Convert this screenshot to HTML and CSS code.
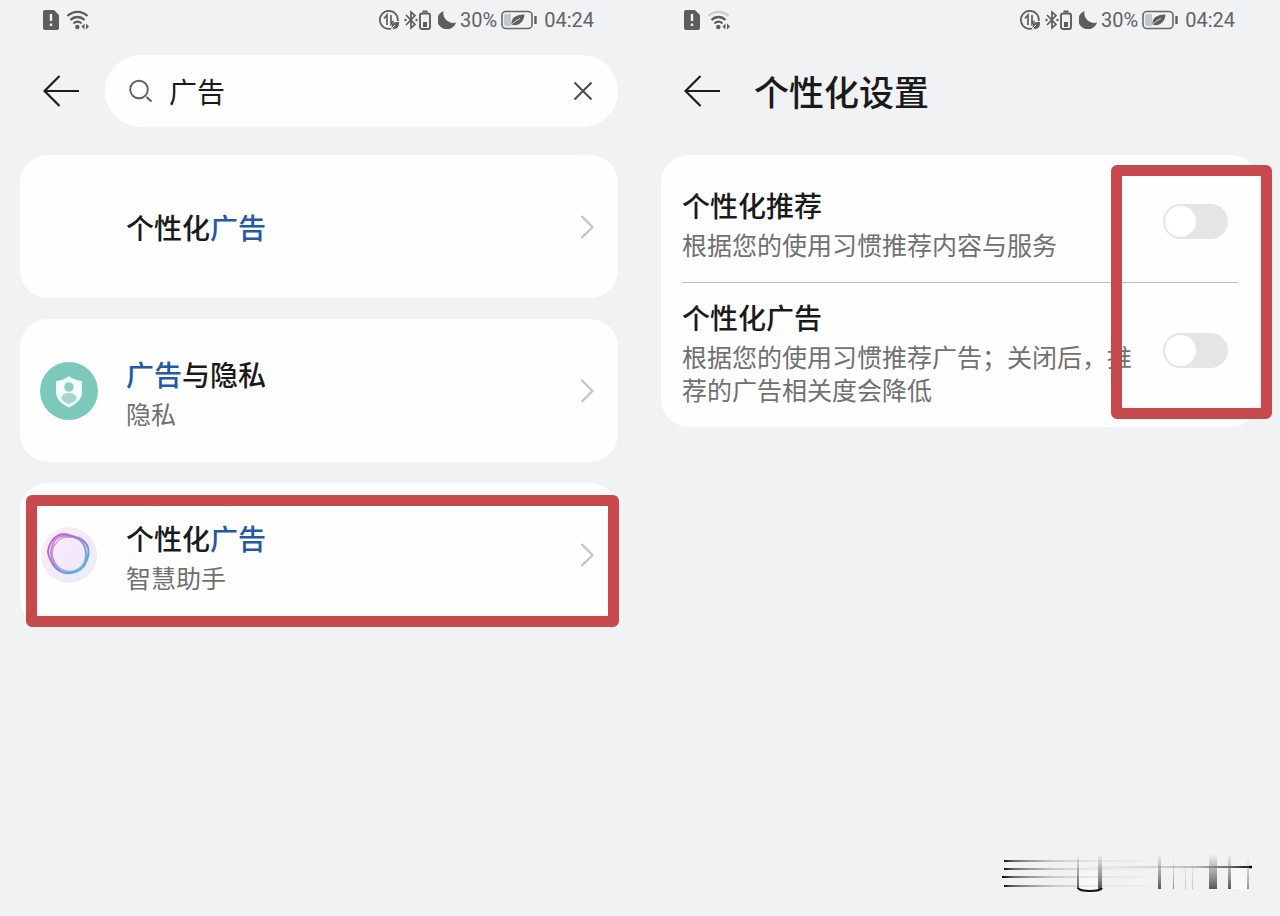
FILE: index.html
```html
<!DOCTYPE html>
<html lang="zh-CN">

<head>
  <meta charset="UTF-8">
  <meta name="viewport" content="width=device-width, initial-scale=1.0">
  <title>个性化广告</title>
  <link rel="stylesheet" href="styles.css">
</head>

<body>
  <!-- shared icons -->
  <svg class="sprite" aria-hidden="true">
    <symbol id="i-sim" viewBox="0 0 16 20">
      <path d="M2 0h9l5 5v13a2 2 0 0 1-2 2H2a2 2 0 0 1-2-2V2a2 2 0 0 1 2-2z" fill="#5c5d5f"/>
      <path d="M8 4v7M8 13.500v2.500" stroke="#f1f2f4" stroke-width="2.400"/>
    </symbol>
    <symbol id="i-wifi" viewBox="0 0 24 20">
      <path d="M1.500 6C7 .4 16 .4 21.500 6" fill="none" stroke="currentColor" stroke-width="2.300"/>
      <path d="M4.500 10c4-4 10-4 14 0M7.500 13.500c2.500-2.300 5.500-2.300 8 0" fill="none" stroke="#5c5d5f" stroke-width="2.300"/>
      <circle cx="11.300" cy="17" r="2.200" fill="#5c5d5f"/>
      <path d="M18.500 13.500v6l-3-3zM20 13.500v6l3-3z" fill="#5c5d5f"/>
    </symbol>
    <symbol id="i-data" viewBox="0 0 22 22">
      <path d="M14 19.300A9 9 0 1 1 19.800 12" fill="none" stroke="#5c5d5f" stroke-width="1.700"/>
      <path d="M9 16V6L6 9.500M13 6v9l2.500-3" fill="none" stroke="#5c5d5f" stroke-width="1.700"/>
      <path d="M14 15c2-2 4-2 7-2 0 4-1 7-5 7-2 0-3-3-2-5z" fill="#5c5d5f"/>
      <path d="M13 20l4-4" stroke="#f1f2f4"/>
    </symbol>
    <symbol id="i-bt" viewBox="0 0 14 20">
      <path d="M2 5l9 9.500L7 18V2l4 3.500L2 15" fill="none" stroke="#5c5d5f" stroke-width="1.700"/>
      <circle cx="1.500" cy="10" r="1.200" fill="#5c5d5f"/>
      <circle cx="12.500" cy="10" r="1.200" fill="#5c5d5f"/>
    </symbol>
    <symbol id="i-btbat" viewBox="0 0 12 20">
      <rect x="1" y="3.500" width="10" height="15.500" rx="2" fill="none" stroke="#5c5d5f" stroke-width="1.900"/>
      <path d="M3.500 1.500h5" stroke="#5c5d5f" stroke-width="2"/>
      <path d="M4 12h4v5H4z" fill="#5c5d5f"/>
    </symbol>
    <symbol id="i-moon" viewBox="0 0 18 18">
      <path d="M5.500 0A9.500 9.500 0 1 0 18 11.500C11 13.500 4 7.500 5.500 0z" fill="#5c5d5f"/>
    </symbol>
    <symbol id="i-battery" viewBox="0 0 36 20">
      <rect x="1" y="1.500" width="30" height="17" rx="4" fill="#f1f2f4" stroke="#66676a" stroke-width="1.600"/>
      <path d="M3 6a2 2 0 0 1 2-2h5v12H5a2 2 0 0 1-2-2z" fill="#c6c7c9"/>
      <path d="M10.500 15C10 8 14 5 23.500 4.500 23 12 18 16 11.500 15z" fill="#5c5d5f"/>
      <path d="M9 16.500c3-4 6-6 10-8" fill="none" stroke="#d8d9db"/>
      <path d="M34.500 6v8" stroke="#5c5d5f" stroke-width="2.400"/>
    </symbol>
    <symbol id="i-back" viewBox="0 0 36 32">
      <path d="M36 16H1.500M16.500 1L1.500 16l15 15" fill="none" stroke="#1c1d1f" stroke-width="2.200"/>
    </symbol>
    <symbol id="i-search" viewBox="0 0 24 24">
      <circle cx="10" cy="10.500" r="8.800" fill="none" stroke="#5f6062" stroke-width="1.900"/>
      <path d="M17.500 18l5 4.500" stroke="#5f6062" stroke-width="2.200"/>
    </symbol>
    <symbol id="i-close" viewBox="0 0 20 20">
      <path d="M1.500 1.500l17 17M18.500 1.500l-17 17" stroke="#4c4d4f" stroke-width="2.100"/>
    </symbol>
    <symbol id="i-chevron" viewBox="0 0 14 24">
      <path d="M1.500 1l11 11-11 11" fill="none" stroke="#c4c4c5" stroke-width="2.200"/>
    </symbol>
  </svg>

  <div class="screens">
    <section class="screen">
      <div class="status-bar">
        <svg class="sim"><use href="#i-sim"/></svg>
        <svg class="wifi"><use href="#i-wifi"/></svg>
        <div class="status-right">
          <svg class="data"><use href="#i-data"/></svg>
          <svg class="bt"><use href="#i-bt"/></svg>
          <svg class="bt-battery"><use href="#i-btbat"/></svg>
          <svg class="moon"><use href="#i-moon"/></svg>
          <span>30%</span>
          <svg class="battery"><use href="#i-battery"/></svg>
          <span class="time">04:24</span>
        </div>
      </div>

      <header class="header">
        <button class="back" type="button" aria-label="返回"><svg><use href="#i-back"/></svg></button>
        <form class="search" role="search">
          <svg class="search-icon"><use href="#i-search"/></svg>
          <input class="search-input" type="text" value="广告" aria-label="搜索">
          <button class="clear" type="button" aria-label="清除"><svg><use href="#i-close"/></svg></button>
        </form>
      </header>

      <div class="results">
        <a class="card result" href="#">
          <span class="result-icon"></span>
          <span class="result-text">
            <span class="title">个性化<mark>广告</mark></span>
          </span>
          <svg class="chevron"><use href="#i-chevron"/></svg>
        </a>

        <a class="card result" href="#">
          <svg class="result-icon" viewBox="0 0 58 58">
            <circle cx="29" cy="29" r="29" fill="#7cc8bb"/>
            <path d="M29 14c4 3 8 4.500 13 5v11c0 7-5 11.500-13 15.500C21 41.500 16 37 16 30V19c5-.5 9-2 13-5z" fill="#f2fffd"/>
            <circle cx="29" cy="25" r="4.800" fill="#93cfc5"/>
            <path d="M21.500 37c0-4 3-6 7.500-6s7.500 2 7.500 6c-2 2.500-4.500 4-7.500 5-3-1-5.500-2.500-7.500-5z" fill="#a5d5cd"/>
          </svg>
          <span class="result-text">
            <span class="title"><mark>广告</mark>与隐私</span>
            <span class="desc">隐私</span>
          </span>
          <svg class="chevron"><use href="#i-chevron"/></svg>
        </a>

        <a class="card result" href="#">
          <svg class="result-icon" viewBox="0 0 58 58">
            <defs>
              <linearGradient id="ring" x1="0" y1="0" x2="1" y2="1">
                <stop offset="0" stop-color="#c660c8"/>
                <stop offset=".45" stop-color="#9a80d4"/>
                <stop offset=".75" stop-color="#649fda"/>
                <stop offset="1" stop-color="#6cb5e0"/>
              </linearGradient>
              <linearGradient id="halo" x1="0" y1="0" x2="1" y2="1">
                <stop offset="0" stop-color="#faf0ec"/>
                <stop offset=".5" stop-color="#f5e8fb"/>
                <stop offset="1" stop-color="#e6f0fc"/>
              </linearGradient>
            </defs>
            <circle cx="29" cy="29" r="28" fill="url(#halo)"/>
            <g fill="none" stroke="url(#ring)">
              <path d="M25 8c5 1 9 3 14 4 6 3 10 8 9.500 15 0 5-2 8-4.500 13-4 5-9 7-15 7-6 1-11-2-15-7-3-5-6-9-6-15 1-6 4-12 9-15 3-2 5-2 8-2z" stroke-width="2"/>
              <path d="M22 10c7-1 13 1 18 4 5 5 6 10 6 15 0 7-3 12-8 15-6 4-13 3-18 0-6-4-8-10-9-16 0-7 2-11 4-14 2-2 4-4 7-4z" stroke-width="2" opacity=".75"/>
              <path d="M28 11c7 0 12 2 15 6 4 6 4 13 2 19-4 6-9 10-16 9-6 0-11-3-14-8-3-6-4-12-1-17 4-6 7-9 14-9z" stroke-width="1.500" opacity=".6"/>
            </g>
          </svg>
          <span class="result-text">
            <span class="title">个性化<mark>广告</mark></span>
            <span class="desc">智慧助手</span>
          </span>
          <svg class="chevron"><use href="#i-chevron"/></svg>
          <span class="frame frame-result"></span>
        </a>
      </div>
    </section>

    <section class="screen">
      <div class="status-bar">
        <svg class="sim"><use href="#i-sim"/></svg>
        <svg class="wifi weak"><use href="#i-wifi"/></svg>
        <div class="status-right">
          <svg class="data"><use href="#i-data"/></svg>
          <svg class="bt"><use href="#i-bt"/></svg>
          <svg class="bt-battery"><use href="#i-btbat"/></svg>
          <svg class="moon"><use href="#i-moon"/></svg>
          <span>30%</span>
          <svg class="battery"><use href="#i-battery"/></svg>
          <span class="time">04:24</span>
        </div>
      </div>

      <header class="header header-title">
        <button class="back" type="button" aria-label="返回"><svg><use href="#i-back"/></svg></button>
        <h1>个性化设置</h1>
      </header>

      <div class="card settings">
        <div class="setting">
          <label class="setting-text" for="recommend">
            <span class="title">个性化推荐</span>
            <span class="desc">根据您的使用习惯推荐内容与服务</span>
          </label>
          <input class="switch" id="recommend" type="checkbox" role="switch">
        </div>
        <div class="setting">
          <label class="setting-text" for="ads">
            <span class="title">个性化广告</span>
            <span class="desc">根据您的使用习惯推荐广告；关闭后，推荐的广告相关度会降低</span>
          </label>
          <input class="switch" id="ads" type="checkbox" role="switch">
        </div>
        <span class="frame frame-switches"></span>
      </div>

      <svg class="watermark" viewBox="0 0 254 44" aria-hidden="true">
        <defs>
          <linearGradient id="fade-r" gradientUnits="userSpaceOnUse" x1="0" x2="254" y1="0" y2="0">
            <stop offset="0" stop-color="#000"/>
            <stop offset=".05" stop-color="#666"/>
            <stop offset=".2" stop-color="#999" stop-opacity=".5"/>
            <stop offset=".35" stop-color="#bbb" stop-opacity=".25"/>
            <stop offset=".65" stop-color="#bbb" stop-opacity="0"/>
          </linearGradient>
          <linearGradient id="fade-l" gradientUnits="userSpaceOnUse" x1="0" x2="254" y1="0" y2="0">
            <stop offset=".3" stop-color="#bbb" stop-opacity="0"/>
            <stop offset=".75" stop-color="#999" stop-opacity=".6"/>
            <stop offset=".92" stop-color="#555"/>
            <stop offset="1" stop-color="#000"/>
          </linearGradient>
          <linearGradient id="fade-d" x1="0" x2="0" y1="0" y2="1">
            <stop offset="0" stop-color="#777" stop-opacity="0"/>
            <stop offset=".5" stop-color="#777" stop-opacity=".6"/>
            <stop offset="1" stop-color="#555"/>
          </linearGradient>
          <linearGradient id="glow" x1="0" x2="0" y1="0" y2="1">
            <stop offset="0" stop-color="#fff" stop-opacity="0"/>
            <stop offset="1" stop-color="#fff" stop-opacity=".7"/>
          </linearGradient>
        </defs>
        <path d="M78 8h20v29H78zM230 12h16v25h-16z" fill="url(#glow)"/>
        <g fill="url(#fade-r)">
          <path d="M3 8h165v2H3zM3 16h165v2H3zM1 24h165v2H1zM3 33h165v2H3z"/>
        </g>
        <path d="M70 14h180v2H70z" fill="url(#fade-l)"/>
        <g fill="url(#fade-d)">
          <path d="M76 2h2v35h-2z"/>
          <path d="M97 2h4v35h-4z"/>
          <path d="M157 2h3v35h-3zM208 2h8v35h-8zM227 2h3v35h-3z"/>
          <path d="M246 6h2v31h-2zM172 8h1v29h-1z" opacity=".6"/>
          <path d="M184 8h1v29h-1zM191 8h1v29h-1z" opacity=".3"/>
        </g>
        <path d="M77 36c2 4 22 4 24 0" fill="none" stroke="#111" stroke-width="2"/>
        <path d="M248 15h3" stroke="#000" stroke-width="2.500"/>
      </svg>
    </section>
  </div>
</body>

</html>
```
FILE: styles.css
```css
:root {
  --bg: #f1f2f4;
  --card: #fefefe;
  --text: #1a1a1a;
  --muted: #707070;
  --status: #626365;
  --link: #2459a6;
  --frame: #c8494d;
}

* {
  margin: 0;
  padding: 0;
  box-sizing: border-box;
}

body {
  background-color: var(--bg);
  color: var(--text);
  font-family: "Noto Sans CJK SC", sans-serif;
}

button {
  border: none;
  background: none;
  cursor: pointer;
}

svg {
  display: block;
  flex-shrink: 0;
}

.sprite {
  position: absolute;
  width: 0;
  height: 0;
}

.screens {
  display: grid;
  grid-template-columns: 1fr 1fr;
  gap: 43px;
  min-height: 100vh;
  padding: 0 21px 0 20px;
}

.screen {
  display: flex;
  flex-direction: column;
  min-width: 0;
}

/* status bar */
.status-bar {
  display: flex;
  align-items: center;
  height: 40px;
  padding: 0 24px 0 23px;
  color: var(--status);
  font-family: Roboto, sans-serif;
  font-size: 20px;
}

.sim {
  width: 16px;
  height: 20px;
  margin-right: 7px;
}

.wifi {
  width: 24px;
  height: 20px;
  color: #5c5d5f;
}

.wifi.weak {
  color: #cbccce;
}

.status-right {
  display: flex;
  align-items: center;
  margin-left: auto;
}

.data {
  width: 22px;
  height: 22px;
  margin-right: 4px;
}

.bt {
  width: 14px;
  height: 20px;
  margin-right: 1px;
}

.bt-battery {
  width: 12px;
  height: 20px;
  margin-right: 7px;
}

.moon {
  width: 18px;
  height: 18px;
  margin-right: 4px;
}

.battery {
  width: 36px;
  height: 20px;
  margin: 0 7px 0 4px;
}

/* header */
.header {
  display: flex;
  align-items: center;
  gap: 26px;
  height: 72px;
  margin: 15px 0 28px;
  padding-left: 23px;
}

.header-title {
  gap: 34px;
}

.back svg {
  width: 36px;
  height: 32px;
}

h1 {
  font-size: 35px;
  font-weight: 500;
  line-height: 48px;
}

.search {
  display: flex;
  flex: 1;
  align-items: center;
  min-width: 0;
  height: 72px;
  padding: 0 25px 0 24px;
  border-radius: 36px;
  background-color: var(--card);
}

.search-icon {
  width: 24px;
  height: 24px;
  margin-right: 16px;
}

.search-input {
  flex: 1;
  min-width: 0;
  border: none;
  outline: none;
  background: none;
  color: var(--text);
  font-family: inherit;
  font-size: 28px;
}

.clear svg {
  width: 20px;
  height: 20px;
}

/* cards */
.card {
  position: relative;
  border-radius: 28px;
  background-color: var(--card);
}

.title,
.desc {
  display: block;
}

.title {
  font-size: 28px;
  font-weight: 500;
  line-height: 46px;
}

.title mark {
  background: none;
  color: var(--link);
}

.desc {
  color: var(--muted);
  font-size: 25px;
  line-height: 33px;
}

.results {
  display: flex;
  flex-direction: column;
  gap: 21px;
}

.result {
  display: flex;
  align-items: center;
  gap: 28px;
  min-height: 143px;
  padding: 0 24px 0 20px;
  color: inherit;
  text-decoration: none;
}

.result-icon {
  flex-shrink: 0;
  width: 58px;
  height: 58px;
}

.result-text {
  flex: 1;
}

.chevron {
  width: 14px;
  height: 24px;
}

.settings {
  padding: 16px 21px 0;
}

.setting {
  display: flex;
  align-items: center;
  gap: 24px;
  padding: 11px 10px 21px 0;
}

.setting + .setting {
  border-top: 1px solid #bdbdbd;
}

.setting-text {
  flex: 1;
}

.switch {
  flex-shrink: 0;
  width: 65px;
  height: 35px;
  padding: 2px;
  border-radius: 18px;
  background-color: #e5e5e5;
  appearance: none;
  cursor: pointer;
}

.switch::before {
  content: '';
  display: block;
  width: 31px;
  height: 31px;
  border-radius: 50%;
  background-color: #fff;
}

.switch:checked {
  background-color: var(--link);
}

.switch:checked::before {
  margin-left: auto;
}

/* red frames over the cards */
.frame {
  position: absolute;
  border: 11px solid var(--frame);
  border-radius: 6px;
  pointer-events: none;
}

.frame-result {
  inset: 12px -1px -1px 6px;
}

.frame-switches {
  top: 10px;
  right: -13px;
  bottom: 8px;
  width: 161px;
}

.watermark {
  width: 254px;
  height: 44px;
  margin: auto 4px 20px auto;
}
```
